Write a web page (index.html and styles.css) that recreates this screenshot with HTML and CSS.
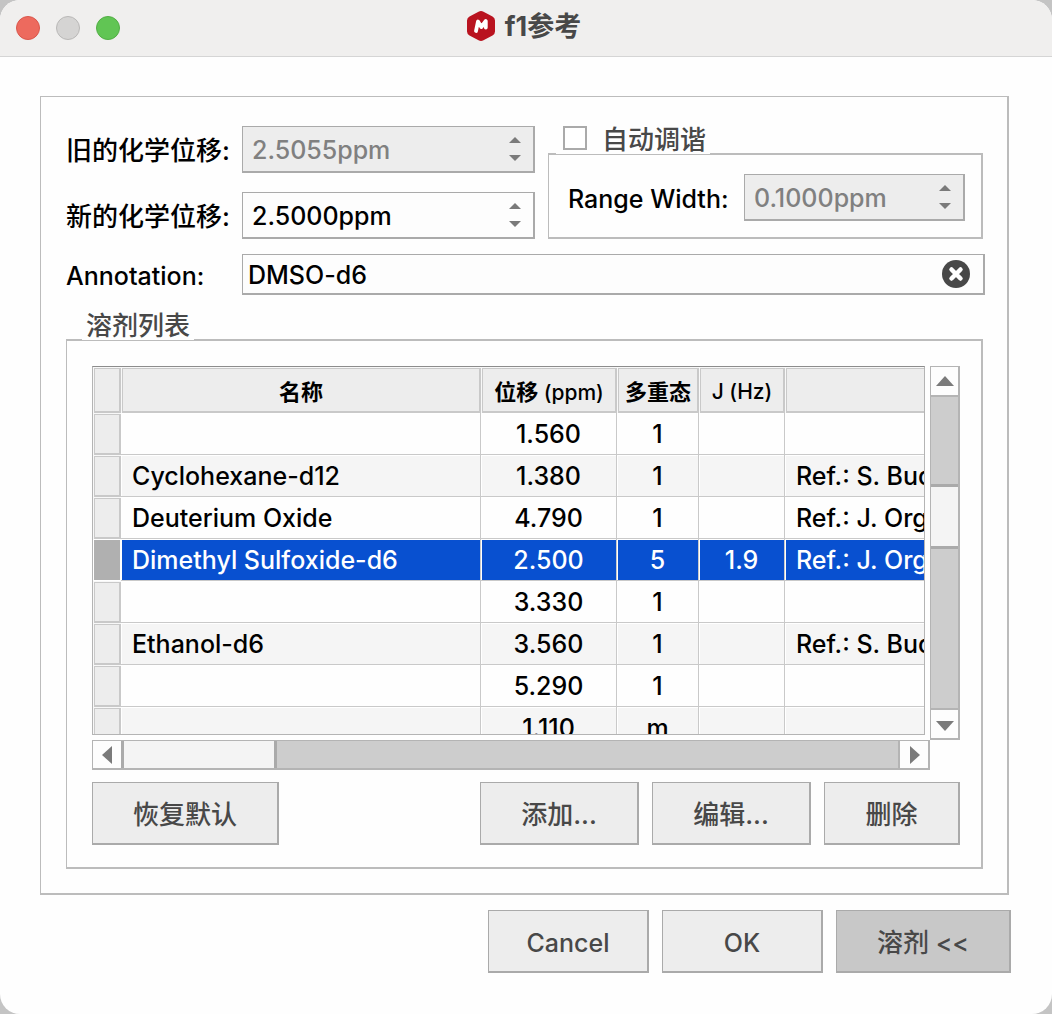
FILE: index.html
```
<!DOCTYPE html>
<html lang="zh-CN">
<head>
  <meta charset="UTF-8">
  <meta name="viewport" content="width=device-width, initial-scale=1.0">
  <title>f1参考</title>
  <link rel="stylesheet" href="styles.css">
</head>
<body>
  <div class="window">
    <header class="titlebar">
      <div class="lights">
        <button class="light close" aria-label="Close"></button>
        <button class="light minimize" aria-label="Minimize" disabled></button>
        <button class="light maximize" aria-label="Zoom"></button>
      </div>
      <h1 class="title">
        <svg width="28" height="30" viewBox="0 0 28 30" aria-hidden="true">
          <path d="M11.5.7Q14-.7 16.500.7L25.500 5.500Q28 7 28 9.500V20.500Q28 23 25.500 24.500L16.500 29.300Q14 30.700 11.500 29.300L2.500 24.500Q0 23 0 20.500V9.500Q0 7 2.500 5.500Z" fill="#b9131f"/>
          <path d="M9 20L11 10.500L14.300 16L18.800 10L18.800 16.500" fill="none" stroke="#fff" stroke-width="3.800" stroke-linecap="round" stroke-linejoin="round"/>
        </svg>
        <span>f1参考</span>
      </h1>
    </header>

    <main>
      <div class="panel">
        <div class="shifts">
          <div class="fields">
            <label class="zh" for="old-shift">旧的化学位移:</label>
            <div class="spin disabled">
              <input type="text" id="old-shift" value="2.5055ppm" disabled>
              <div class="steps">
                <button aria-label="Up" disabled><svg width="12" height="6"><path d="M0 6L6 0L12 6Z"/></svg></button>
                <button aria-label="Down" disabled><svg width="12" height="6"><path d="M0 0L6 6L12 0Z"/></svg></button>
              </div>
            </div>
            <label class="zh" for="new-shift">新的化学位移:</label>
            <div class="spin">
              <input type="text" id="new-shift" value="2.5000ppm">
              <div class="steps">
                <button aria-label="Up"><svg width="12" height="6"><path d="M0 6L6 0L12 6Z"/></svg></button>
                <button aria-label="Down"><svg width="12" height="6"><path d="M0 0L6 6L12 0Z"/></svg></button>
              </div>
            </div>
          </div>
          <div class="group tuning">
            <div class="group-title zh">
              <input type="checkbox" id="auto-tune">
              <label for="auto-tune">自动调谐</label>
            </div>
            <div class="group-box range">
              <label for="range-width">Range Width:</label>
              <div class="spin disabled">
                <input type="text" id="range-width" value="0.1000ppm" disabled>
                <div class="steps">
                  <button aria-label="Up" disabled><svg width="12" height="6"><path d="M0 6L6 0L12 6Z"/></svg></button>
                  <button aria-label="Down" disabled><svg width="12" height="6"><path d="M0 0L6 6L12 0Z"/></svg></button>
                </div>
              </div>
            </div>
          </div>
        </div>

        <div class="annotation">
          <label for="annotation">Annotation:</label>
          <div class="textbox">
            <input type="text" id="annotation" value="DMSO-d6">
            <button class="clear" aria-label="Clear">
              <svg width="28" height="28" viewBox="0 0 28 28">
                <circle cx="14" cy="14" r="14" fill="#484848"/>
                <path d="M9.500 9.500L18.500 18.500M18.500 9.500L9.500 18.500" stroke="#fff" stroke-width="4.500" stroke-linecap="round"/>
              </svg>
            </button>
          </div>
        </div>

        <div class="group solvents">
          <div class="group-title zh">溶剂列表</div>
          <div class="group-box">
            <div class="list">
              <div class="viewport">
                <table>
                  <colgroup>
                    <col class="c-row"><col><col class="c-shift"><col class="c-mult"><col class="c-j"><col class="c-ref">
                  </colgroup>
                  <thead>
                    <tr><th></th><th class="zh">名称</th><th><span class="zh">位移</span> (ppm)</th><th class="zh">多重态</th><th>J (Hz)</th><th></th></tr>
                  </thead>
                  <tbody>
                    <tr><th></th><td></td><td>1.560</td><td>1</td><td></td><td></td></tr>
                    <tr><th></th><td>Cyclohexane-d12</td><td>1.380</td><td>1</td><td></td><td>Ref.: S. Bud</td></tr>
                    <tr><th></th><td>Deuterium Oxide</td><td>4.790</td><td>1</td><td></td><td>Ref.: J. Org</td></tr>
                    <tr class="selected"><th></th><td>Dimethyl Sulfoxide-d6</td><td>2.500</td><td>5</td><td>1.9</td><td>Ref.: J. Org</td></tr>
                    <tr><th></th><td></td><td>3.330</td><td>1</td><td></td><td></td></tr>
                    <tr><th></th><td>Ethanol-d6</td><td>3.560</td><td>1</td><td></td><td>Ref.: S. Bud</td></tr>
                    <tr><th></th><td></td><td>5.290</td><td>1</td><td></td><td></td></tr>
                    <tr><th></th><td></td><td>1.110</td><td>m</td><td></td><td></td></tr>
                  </tbody>
                </table>
              </div>
              <div class="scroll vertical">
                <button aria-label="Scroll up"><svg width="18" height="10"><path d="M0 10L9 0L18 10Z"/></svg></button>
                <div class="track before"></div>
                <div class="thumb"></div>
                <div class="track after"></div>
                <button class="end" aria-label="Scroll down"><svg width="18" height="10"><path d="M0 0L9 10L18 0Z"/></svg></button>
              </div>
              <div class="scroll horizontal">
                <button aria-label="Scroll left"><svg width="10" height="18"><path d="M10 0L0 9L10 18Z"/></svg></button>
                <div class="thumb"></div>
                <div class="track after"></div>
                <button class="end" aria-label="Scroll right"><svg width="10" height="18"><path d="M0 0L10 9L0 18Z"/></svg></button>
              </div>
            </div>
            <div class="actions">
              <button class="btn zh restore">恢复默认</button>
              <button class="btn zh">添加...</button>
              <button class="btn zh">编辑...</button>
              <button class="btn zh narrow">删除</button>
            </div>
          </div>
        </div>
      </div>

      <div class="footer">
        <button class="btn">Cancel</button>
        <button class="btn">OK</button>
        <button class="btn pressed"><span class="zh">溶剂</span> &lt;&lt;</button>
      </div>
    </main>
  </div>
</body>
</html>
```
FILE: styles.css
```
* {
  box-sizing: border-box;
}
body {
  margin: 0;
  background-color: #c4c4c4;
  color: #000;
  font-family: Inter, "Noto Sans CJK SC", sans-serif;
  font-size: 25px;
  font-weight: 500;
  line-height: 30px;
}
button, input {
  font: inherit;
  color: inherit;
  margin: 0;
  padding: 0;
  border: none;
  background: none;
}
svg {
  display: block;
  fill: #7a7a7a;
}
.zh {
  font-size: 26px;
}
.window {
  min-height: 100vh;
  background-color: #fefefe;
  border-radius: 20px;
  overflow: hidden;
}

/* title bar */
.titlebar {
  display: grid;
  grid-template-columns: 1fr auto 1fr;
  align-items: center;
  height: 57px;
  padding: 0 20px 0 16px;
  background-color: #f0efee;
  border-bottom: 1px solid #d5d5d5;
}
.lights {
  display: flex;
  gap: 16px;
}
.light {
  width: 24px;
  height: 24px;
  border: 1px solid #b9b8b7;
  border-radius: 50%;
  background-color: #d5d4d3;
}
.close {
  background-color: #ed6a5e;
  border-color: #d9574c;
}
.maximize {
  background-color: #61c554;
  border-color: #52ae45;
}
.title {
  display: flex;
  align-items: center;
  gap: 10px;
  margin: 0;
  padding-bottom: 4px;
  color: #484848;
  font-size: 27px;
  font-weight: 700;
}
.title span {
  padding-top: 2px;
}

main {
  padding: 39px 41px 40px 40px;
}
.panel {
  margin-right: 2px;
  padding: 29px 22px 24px 25px;
  border: solid #bcbcbc;
  border-width: 1px 2px 2px 1px;
}

/* fields */
.shifts {
  display: flex;
  gap: 13px;
}
.fields {
  display: grid;
  grid-template-columns: 176px 293px;
  row-gap: 19px;
  align-items: center;
}
.spin, .textbox {
  display: flex;
  align-items: center;
  background-color: #fdfdfd;
  border: solid #aaa;
  border-width: 1px 2px 2px 1px;
}
.spin {
  height: 47px;
  padding: 0 12px 0 9px;
}
.spin input, .textbox input {
  flex: 1;
  width: 0;
  min-width: 0;
  padding-top: 2px;
  outline: none;
}
.fields > label, .range > label, .annotation > label {
  padding-top: 2px;
}
.disabled {
  background-color: #ededed;
  color: #808080;
}
.steps {
  display: flex;
  flex-direction: column;
  gap: 12px;
}
.steps button {
  display: block;
}
.annotation {
  display: grid;
  grid-template-columns: 176px 1fr;
  align-items: center;
  margin-top: 15px;
}
.textbox {
  height: 41px;
  padding: 0 13px 0 5px;
}

/* group boxes */
.group {
  margin-right: 2px;
}
.group-title {
  position: relative;
  width: max-content;
  margin-bottom: -1px;
  padding: 0 4px;
  background-color: #fefefe;
  color: #484848;
  line-height: 28px;
}
.group-box {
  border: solid #bcbcbc;
  border-width: 2px 2px 2px 1px;
}
.tuning {
  flex: 1;
}
.tuning .group-title {
  display: flex;
  align-items: center;
  gap: 15px;
  margin-left: 8px;
  padding-left: 7px;
}
.tuning input[type="checkbox"] {
  appearance: none;
  width: 24px;
  height: 24px;
  border: 2px solid #aaa;
  background-color: #fff;
  margin-bottom: 4px;
}
.range {
  display: flex;
  align-items: center;
  justify-content: space-between;
  gap: 12px;
  padding: 19px 16px 16px 19px;
  white-space: nowrap;
}
.range .spin {
  flex: 0 1 221px;
}
.solvents {
  margin-top: 17px;
}
.solvents > .group-title {
  margin-left: 16px;
}
.solvents > .group-box {
  padding: 25px 21px 22px 25px;
}

/* solvent table */
.list {
  display: grid;
  grid-template-columns: minmax(0, 1fr) 30px;
  grid-template-rows: 369px 30px;
  gap: 5px;
}
.viewport {
  overflow: hidden;
  border: 1px solid #b4b4b4;
  border-top-color: #8c8c8c;
}
table {
  width: calc(100% + 261px);
  table-layout: fixed;
  border-collapse: separate;
  border-spacing: 0;
}
.c-row { width: 28px; }
.c-shift { width: 136px; }
.c-mult { width: 82px; }
.c-j { width: 86px; }
.c-ref { width: 400px; }
th {
  padding: 0;
  background-color: #ededed;
  box-shadow: inset 1px 1px 0 #f8f8f8, inset 2px 2px 0 #c9c9c9, inset -2px -2px 0 #c9c9c9;
  font-size: 21px;
  font-weight: 500;
  white-space: nowrap;
}
thead th {
  height: 46px;
  padding-top: 4px;
}
thead .zh {
  font-size: 22px;
  font-weight: 600;
}
td {
  height: 42px;
  padding: 0 11px;
  border: solid #c9c9c9;
  border-width: 0 1px 1px 0;
  box-shadow: inset 1px 1px 0 #fff;
  text-align: center;
  white-space: nowrap;
}
td:nth-child(2), td:last-child {
  text-align: left;
}
tbody tr:nth-child(even) td {
  background-color: #f5f5f5;
}
tbody tr.selected td {
  background-color: #0850d0;
  color: #fff;
}
.selected th {
  background-color: #b0b0b0;
  box-shadow: inset 0 0 0 1px #fff;
}

/* scroll bars */
.scroll {
  display: flex;
  border: solid #b4b4b4;
  border-width: 1px 2px 2px 1px;
}
.vertical {
  flex-direction: column;
  height: 374px;
}
.scroll button {
  display: flex;
  flex: 0 0 28px;
  align-items: center;
  justify-content: center;
  background-color: #fdfdfd;
}
.vertical .end {
  padding-top: 4px;
}
.horizontal .end {
  padding-left: 2px;
}
.track {
  flex: 1;
  background-color: #cdcdcd;
}
.thumb {
  background-color: #f4f4f4;
  border: 0 solid #aaa;
}
.vertical .before {
  flex: 0 0 89px;
  border-top: 2px solid #b4b4b4;
}
.vertical .thumb {
  flex: 0 0 65px;
  border-width: 3px 0;
}
.vertical .after {
  border-bottom: 2px solid #b4b4b4;
}
.horizontal {
  margin-right: -5px;
}
.horizontal .thumb {
  flex: 0 0 156px;
  border-width: 0 3px;
}
.horizontal .after {
  border-right: 2px solid #b4b4b4;
}

/* buttons */
.btn {
  width: 159px;
  height: 63px;
  padding-top: 3px;
  background-color: #ededed;
  border: solid #aaa;
  border-width: 1px 2px 2px 1px;
  color: #484848;
}
.actions {
  display: flex;
  gap: 13px;
  margin-top: 12px;
}
.restore {
  width: 187px;
  margin-right: auto;
}
.narrow {
  width: 136px;
}
.footer {
  display: flex;
  justify-content: flex-end;
  gap: 13px;
  margin-top: 15px;
}
.footer .btn {
  width: 161px;
}
.footer .pressed {
  width: 175px;
  background-color: #c8c8c8;
}
```
